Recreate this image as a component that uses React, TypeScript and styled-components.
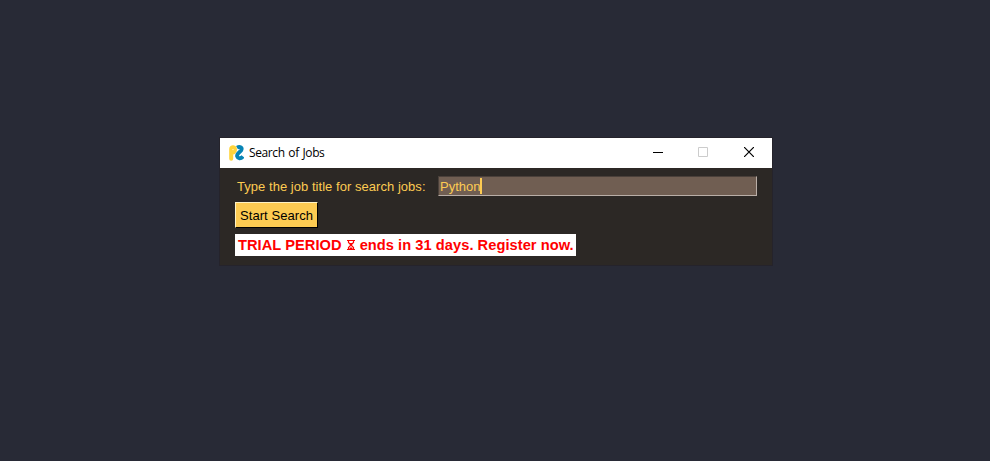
import React from 'react';
import styled, { createGlobalStyle } from 'styled-components';

const GlobalStyle = createGlobalStyle`
  * { box-sizing: border-box; }
  body { margin: 0; background: #282a36; overflow: hidden; }
`;

const Desktop = styled.main`
  height: 461px;
  padding: 138px 0 0 220px;
  background: #282a36;
  font-family: "Liberation Sans", Arial, sans-serif;
`;

const Window = styled.section`
  width: 552px;
  height: 127px;
  background: #2c2825;
  box-shadow: 0 0 0 1px #25232b;
`;

const TitleBar = styled.header`
  display: flex;
  align-items: center;
  height: 30px;
  padding-left: 8px;
  background: #fff;
`;

const Title = styled.h1`
  flex: 1;
  margin: 0 0 0 5px;
  font: 400 12px/16px "Open Sans", sans-serif;
  letter-spacing: -0.4px;
  word-spacing: 1px;
  color: #000;
`;

const WindowButton = styled.button<{ $disabled?: boolean }>`
  display: flex;
  align-items: center;
  justify-content: center;
  width: 46px;
  height: 30px;
  padding: 0 0 2px;
  border: 0;
  background: transparent;
  color: ${({ $disabled }) => ($disabled ? '#ccc' : '#000')};
`;

const Form = styled.div`
  display: flex;
  flex-direction: column;
  align-items: flex-start;
  gap: 6px;
  padding: 8px 15px 0;
`;

const FieldRow = styled.div`
  display: flex;
  width: 522px;
  height: 20px;
`;

const Label = styled.label`
  width: 203px;
  padding: 2px 0 0 2px;
  font-size: 13px;
  line-height: 17px;
  letter-spacing: 0.04px;
  white-space: nowrap;
  color: #fdcb52;
`;

const Field = styled.div`
  display: flex;
  align-items: flex-start;
  width: 319px;
  height: 20px;
  padding: 1px 1px 0;
  border: 1px solid;
  border-color: #4a403a #b9aea7 #b9aea7 #4a403a;
  background: #705e52;
  font-size: 13px;
  line-height: 17px;
  color: #fdcb52;
`;

const Caret = styled.span`
  width: 2px;
  height: 16px;
  background: #fdcb52;
`;

const SearchButton = styled.button`
  width: 83px;
  height: 26px;
  padding: 1px 0 0;
  border: 1px solid;
  border-color: #fff3c4 #000 #000 #fff3c4;
  border-radius: 0;
  background: #fdcb52;
  font: 13px/17px "Liberation Sans", Arial, sans-serif;
  letter-spacing: 0.06px;
  white-space: nowrap;
  color: #000;
`;

const TrialNotice = styled.div`
  display: flex;
  width: 341px;
  height: 22px;
  padding: 2px 0 0 3px;
  background: #fff;
  font-size: 14.67px;
  font-weight: 700;
  line-height: 18px;
  letter-spacing: 0.04px;
  white-space: pre;
  color: #f00;
`;

const Hourglass = styled.svg`
  flex: none;
  margin: 4px 4px 0;
`;

export default function App() {
  return (
    <>
      <GlobalStyle />
      <Desktop>
        <Window>
          <TitleBar>
            <svg width="16" height="18" viewBox="0 0 16 18" fill="none" aria-hidden="true">
              <path d="M3.2 14.8V5C3.2 2.6 7 2.6 7 5.8C7 8.4 5 8.8 3.4 8.6" stroke="#ffd43b" strokeWidth="4" strokeLinecap="round" strokeLinejoin="round" />
              <path d="M9 3.6c3-1.6 5.8.2 4 3L10.2 9.4c-2 2-1 4.6 1.2 4.8 1.6.2 2.8-.8 3.6-1.8" stroke="#0784b5" strokeWidth="3.9" />
              <circle cx="5" cy="5.6" r="0.7" fill="#fff8d0" />
            </svg>
            <Title>Search of Jobs</Title>
            <WindowButton aria-label="Minimize">
              <svg width="12" height="10"><path d="M2 5.5h10" stroke="currentColor" /></svg>
            </WindowButton>
            <WindowButton aria-label="Maximize" $disabled>
              <svg width="10" height="10"><path d="M.5.5h9v9h-9z" fill="none" stroke="currentColor" /></svg>
            </WindowButton>
            <WindowButton aria-label="Close">
              <svg width="10" height="10"><path d="M0 0l10 10M10 0L0 10" stroke="currentColor" strokeWidth="1.2" /></svg>
            </WindowButton>
          </TitleBar>
          <Form>
            <FieldRow>
              <Label>Type the job title for search jobs:</Label>
              <Field role="textbox">Python<Caret /></Field>
            </FieldRow>
            <SearchButton>Start Search</SearchButton>
            <TrialNotice>
              <span>TRIAL PERIOD</span>
              <Hourglass width="10" height="10" viewBox="0 0 10 10" fill="none" stroke="#f00">
                <path d="M1 .5h8M1 9.5h8M2.5 1v1.5L5 5 2.5 7.5V9M7.5 1v1.5L5 5l2.5 2.5V9" strokeWidth="1.2" />
                <path d="M3.5 3h3L5 5zM3 9l2-2 2 2z" fill="#f00" stroke="none" />
              </Hourglass>
              <span>ends in 31 days. Register now.</span>
            </TrialNotice>
          </Form>
        </Window>
      </Desktop>
    </>
  );
}
